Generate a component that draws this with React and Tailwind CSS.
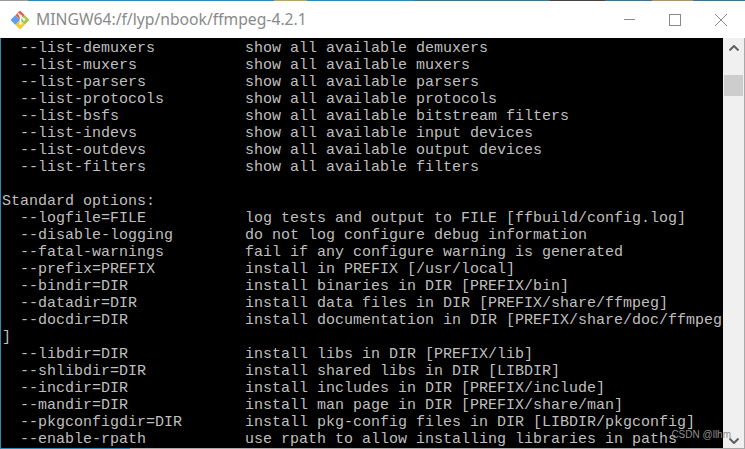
const lines = [
  ["  --list-demuxers", "show all available demuxers"],
  ["  --list-muxers", "show all available muxers"],
  ["  --list-parsers", "show all available parsers"],
  ["  --list-protocols", "show all available protocols"],
  ["  --list-bsfs", "show all available bitstream filters"],
  ["  --list-indevs", "show all available input devices"],
  ["  --list-outdevs", "show all available output devices"],
  ["  --list-filters", "show all available filters"],
  ["", ""],
  ["Standard options:", ""],
  ["  --logfile=FILE", "log tests and output to FILE [ffbuild/config.log]"],
  ["  --disable-logging", "do not log configure debug information"],
  ["  --fatal-warnings", "fail if any configure warning is generated"],
  ["  --prefix=PREFIX", "install in PREFIX [/usr/local]"],
  ["  --bindir=DIR", "install binaries in DIR [PREFIX/bin]"],
  ["  --datadir=DIR", "install data files in DIR [PREFIX/share/ffmpeg]"],
  ["  --docdir=DIR", "install documentation in DIR [PREFIX/share/doc/ffmpeg"],
  ["]", ""],
  ["  --libdir=DIR", "install libs in DIR [PREFIX/lib]"],
  ["  --shlibdir=DIR", "install shared libs in DIR [LIBDIR]"],
  ["  --incdir=DIR", "install includes in DIR [PREFIX/include]"],
  ["  --mandir=DIR", "install man page in DIR [PREFIX/share/man]"],
  ["  --pkgconfigdir=DIR", "install pkg-config files in DIR [LIBDIR/pkgconfig]"],
  ["  --enable-rpath", "use rpath to allow installing libraries in paths"],
];

function Logo() {
  return (
    <svg width="20" height="20" viewBox="0 0 20 20" className="shrink-0">
      <polygon points="10,0.500 14.800,5.300 10,10 5.300,5.300" fill="#e8604f" />
      <polygon points="14.800,5.300 19.500,10 14.800,14.700 10,10" fill="#a5c94f" />
      <polygon points="10,10 14.800,14.700 10,19.500 5.300,14.700" fill="#f3c93f" />
      <polygon points="5.300,5.300 10,10 5.300,14.700 0.500,10" fill="#5f9df0" />
      <path d="M8 3.500L10.500 6L14 9.500M10.500 6V13" stroke="#fff" strokeWidth="1.300" fill="none" />
      <circle cx="10.500" cy="6" r="1.300" fill="#fff" />
      <circle cx="14" cy="9.500" r="1.300" fill="#fff" />
      <circle cx="10.500" cy="13.500" r="1.300" fill="#fff" />
    </svg>
  );
}

export default function App() {
  return (
    <div className="w-[745px] h-[449px] overflow-hidden bg-white flex flex-col relative">
      <div className="h-px shrink-0 flex">
        <div className="w-[28px] bg-[#9a9a9a]" />
        <div className="w-[246px] bg-[#2a8ab8]" />
        <div className="w-[33px] bg-[#b5a36a]" />
        <div className="w-[107px] bg-[#2a8ab8]" />
        <div className="w-[136px] bg-[#3d7390]" />
        <div className="w-[55px] bg-[#4a4440]" />
        <div className="w-[47px] bg-[#3d7390]" />
        <div className="w-[41px] bg-[#a8976a]" />
        <div className="flex-1 bg-[#3d7390]" />
      </div>
      <div className="h-[37px] shrink-0 bg-white flex items-center pl-[10px] gap-[6px]">
        <Logo />
        <span className="text-[15.7px] text-[#8a8a8a] font-['Noto_Sans',sans-serif]">MINGW64:/f/lyp/nbook/ffmpeg-4.2.1</span>
        <div className="ml-auto flex items-center pr-[1px]">
          <div className="w-[46px] h-[37px] flex items-center justify-center"><div className="w-[11px] h-px bg-[#8a8a8a]" /></div>
          <div className="w-[46px] h-[37px] flex items-center justify-center"><div className="w-[12px] h-[12px] border border-[#8a8a8a]" /></div>
          <div className="w-[46px] h-[37px] flex items-center justify-center">
            <svg width="12" height="12" viewBox="0 0 12 12"><path d="M0 0L12 12M12 0L0 12" stroke="#8a8a8a" strokeWidth="1" /></svg>
          </div>
        </div>
      </div>
      <div className="flex-1 flex min-h-0 border-l border-l-[#3a86a8] border-r border-r-[#a9a9a9]">
        <div className="flex-1 bg-black pt-[1px] overflow-hidden font-['Liberation_Mono',monospace] text-[15px] leading-[17px] text-[#bfbfbf] whitespace-pre">
          {lines.map(([a, b], i) => (
            <div key={i} className="h-[17px] flex pl-[1px] pt-px">
              <span className="w-[243px] shrink-0">{a}</span>
              <span>{b}</span>
            </div>
          ))}
        </div>
        <div className="w-[21px] shrink-0 bg-[#f0f0f0] flex flex-col items-center pt-[7px]">
          <svg width="10" height="6" viewBox="0 0 10 6"><path d="M0.500 5.500L5 1L9.500 5.500" fill="none" stroke="#606060" strokeWidth="2" /></svg>
          <div className="w-[19px] h-[21px] mt-[24px] bg-[#cdcdcd]" />
          <div className="mt-auto mb-[4px]">
            <svg width="10" height="6" viewBox="0 0 10 6"><path d="M0.500 0.500L5 5L9.500 0.500" fill="none" stroke="#606060" strokeWidth="2" /></svg>
          </div>
        </div>
      </div>
      <div className="h-px shrink-0 flex">
        <div className="w-[130px] bg-[#2a8ab8]" />
        <div className="flex-1 bg-[#a9a9a9]" />
      </div>
      <span className="absolute right-[14px] bottom-[9px] text-[10px] leading-none text-[#8f8f8f] font-['Liberation_Sans',sans-serif]">CSDN @llhm</span>
    </div>
  );
}
